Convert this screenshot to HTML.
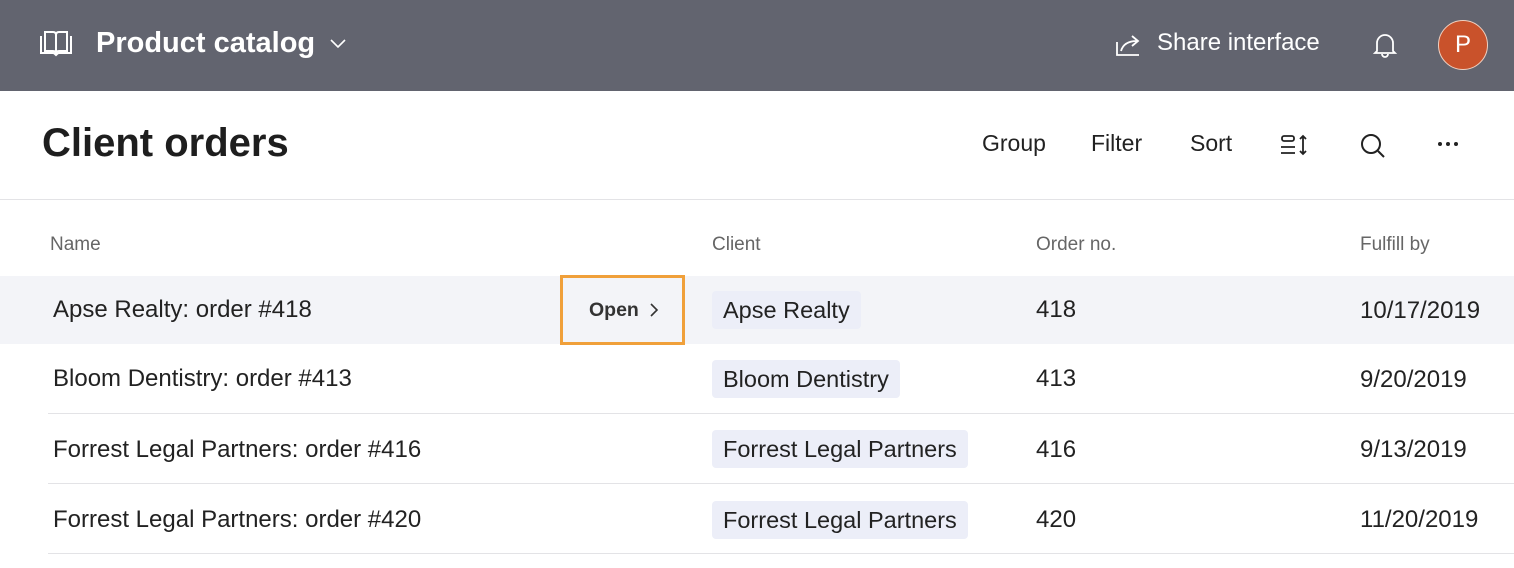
<!DOCTYPE html>
<html><head><style>
*{margin:0;padding:0;box-sizing:border-box}
body{width:1514px;height:568px;overflow:hidden;background:#fff;font-family:"Liberation Sans",sans-serif;color:#222;position:relative}
.hdr{position:absolute;left:0;top:0;width:1514px;height:91px;background:#62646f;color:#fff}
.abs{position:absolute}
.line{position:absolute;height:1px;background:#e3e3e6}
.cell{position:absolute;font-size:24px;color:#222}
.chip{position:absolute;background:#eceef8;border-radius:4px;font-size:23.5px;padding:0 11px;height:38px;line-height:38px;color:#222}
.th{position:absolute;top:234px;font-size:19px;color:#666}
</style></head><body>
<div class="hdr">
<svg class="abs" style="left:39px;top:29px" width="34" height="30" viewBox="0 0 34 30" fill="none" stroke="#fff" stroke-width="2"><path d="M6 3v19h8c2 0 3 1 3 3c0-2 1-3 3-3h8V3h-8c-2 0-3 1-3 3c0-2-1-3-3-3z M17 6v19 M2 7v17h12c1 0 2 1 3 2c1-1 2-2 3-2h12V7"/></svg>
<div class="abs" style="left:96px;top:27px;font-size:29px;font-weight:bold">Product catalog</div>
<svg class="abs" style="left:329px;top:38px" width="18" height="12" viewBox="0 0 18 12" fill="none" stroke="#fff" stroke-width="1.6"><path d="M2 2l7 7 7-7"/></svg>
<svg class="abs" style="left:1115px;top:32px" width="28" height="26" viewBox="0 0 28 26" fill="none" stroke="#fff" stroke-width="1.8"><path d="M2 10v13h22 M6 19c2-7 8-10 16-10 M17 4l6 5-6 5"/></svg>
<div class="abs" style="left:1157px;top:29px;font-size:24px">Share interface</div>
<svg class="abs" style="left:1372px;top:31px" width="26" height="28" viewBox="0 0 26 28" fill="none" stroke="#fff" stroke-width="1.8"><path d="M5 20V12a8 8 0 0 1 16 0v8l2 2H3z M10 23a3 3 0 0 0 6 0"/></svg>
<div class="abs" style="left:1438px;top:20px;width:50px;height:50px;border-radius:50%;background:#c9522b;border:1.5px solid #f0d0c0;text-align:center;line-height:47px;font-size:24px">P</div>
</div>
<div class="abs" style="left:42px;top:121px;font-size:40px;font-weight:bold;color:#1e1e1e">Client orders</div>
<div class="abs" style="left:982px;top:130px;font-size:23px">Group</div>
<div class="abs" style="left:1091px;top:130px;font-size:23px">Filter</div>
<div class="abs" style="left:1190px;top:130px;font-size:23px">Sort</div>
<svg class="abs" style="left:1279px;top:133px" width="30" height="24" viewBox="0 0 30 24" fill="none" stroke="#222" stroke-width="1.8"><rect x="3" y="3" width="12" height="5" rx="2"/><path d="M2 14h14M2 20h14M24 3v18M21 6l3-3 3 3M21 18l3 3 3-3"/></svg>
<svg class="abs" style="left:1359px;top:132px" width="28" height="28" viewBox="0 0 28 28" fill="none" stroke="#222" stroke-width="2"><circle cx="12" cy="12" r="9"/><path d="M19 19l6 6"/></svg>
<svg class="abs" style="left:1436px;top:140px" width="24" height="8"><circle cx="4" cy="4" r="2" fill="#222"/><circle cx="12" cy="4" r="2" fill="#222"/><circle cx="20" cy="4" r="2" fill="#222"/></svg>
<div class="line" style="left:0;top:199px;width:1514px"></div>
<div class="th" style="left:50px">Name</div>
<div class="th" style="left:712px">Client</div>
<div class="th" style="left:1036px">Order no.</div>
<div class="th" style="left:1360px">Fulfill by</div>
<div class="abs" style="left:0;top:276px;width:1514px;height:68px;background:#f3f4f8"></div>
<div class="line" style="left:48px;top:413px;width:1466px"></div>
<div class="line" style="left:48px;top:483px;width:1466px"></div>
<div class="line" style="left:48px;top:553px;width:1466px"></div>
<div class="abs" style="left:560px;top:275px;width:125px;height:70px;border:3px solid #f0a03a"></div>
<div class="abs" style="left:589px;top:299px;font-size:19.5px;font-weight:bold;color:#333">Open</div>
<svg class="abs" style="left:647px;top:301px" width="14" height="18" viewBox="0 0 14 18" fill="none" stroke="#333" stroke-width="1.6"><path d="M4 3l6 6-6 6"/></svg>

<div class="cell" style="left:53px;top:296px">Apse Realty: order #418</div>
<div class="chip" style="left:712px;top:291px">Apse Realty</div>
<div class="cell" style="left:1036px;top:296px">418</div>
<div class="cell" style="left:1360px;top:297px">10/17/2019</div>

<div class="cell" style="left:53px;top:365px">Bloom Dentistry: order #413</div>
<div class="chip" style="left:712px;top:360px">Bloom Dentistry</div>
<div class="cell" style="left:1036px;top:365px">413</div>
<div class="cell" style="left:1360px;top:366px">9/20/2019</div>

<div class="cell" style="left:53px;top:436px">Forrest Legal Partners: order #416</div>
<div class="chip" style="left:712px;top:430px">Forrest Legal Partners</div>
<div class="cell" style="left:1036px;top:436px">416</div>
<div class="cell" style="left:1360px;top:436px">9/13/2019</div>

<div class="cell" style="left:53px;top:506px">Forrest Legal Partners: order #420</div>
<div class="chip" style="left:712px;top:501px">Forrest Legal Partners</div>
<div class="cell" style="left:1036px;top:506px">420</div>
<div class="cell" style="left:1360px;top:506px">11/20/2019</div>
</body></html>
